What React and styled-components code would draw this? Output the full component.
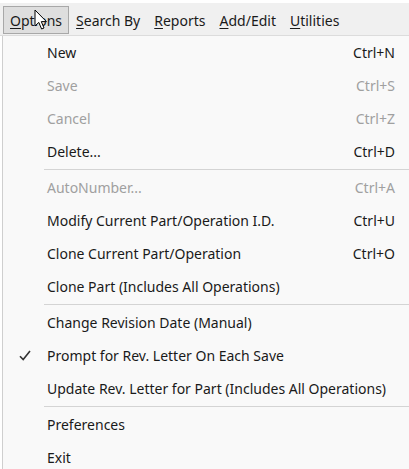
import React from 'react';
import styled, { createGlobalStyle } from 'styled-components';

const GlobalStyle = createGlobalStyle`
  html, body { margin: 0; padding: 0; background: #ffffff; }
  body { font-family: "Noto Sans", "Open Sans", sans-serif; }
`;

const menuNames = [
  { key: 'O', rest: 'ptions', active: true },
  { key: 'S', rest: 'earch By' },
  { key: 'R', rest: 'eports' },
  { key: 'A', rest: 'dd/Edit' },
  { key: 'U', rest: 'tilities' },
];

const items = [
  { label: 'New', shortcut: 'Ctrl+N' },
  { label: 'Save', shortcut: 'Ctrl+S', disabled: true },
  { label: 'Cancel', shortcut: 'Ctrl+Z', disabled: true },
  { label: 'Delete...', shortcut: 'Ctrl+D' },
  { separator: true },
  { label: 'AutoNumber...', shortcut: 'Ctrl+A', disabled: true },
  { label: 'Modify Current Part/Operation I.D.', shortcut: 'Ctrl+U' },
  { label: 'Clone Current Part/Operation', shortcut: 'Ctrl+O' },
  { label: 'Clone Part (Includes All Operations)' },
  { separator: true },
  { label: 'Change Revision Date (Manual)' },
  { label: 'Prompt for Rev. Letter On Each Save', checked: true },
  { label: 'Update Rev. Letter for Part (Includes All Operations)' },
  { separator: true },
  { label: 'Preferences' },
  { label: 'Exit' },
];

function App() {
  return (
    <Screen>
      <GlobalStyle />
      <MenuBar>
        {menuNames.map((m) => (
          <BarItem key={m.key} active={m.active}>
            <u>{m.key}</u>{m.rest}
          </BarItem>
        ))}
      </MenuBar>
      <Dropdown>
        {items.map((it, i) =>
          it.separator ? (
            <Separator key={i} />
          ) : (
            <Item key={i} disabled={it.disabled}>
              <CheckCell>
                {it.checked && (
                  <svg width="12" height="11" viewBox="0 0 12 11">
                    <path d="M1 6.2 L4.2 9.6 L11 1" fill="none" stroke="#333" strokeWidth="1.6" />
                  </svg>
                )}
              </CheckCell>
              <Label>{it.label}</Label>
              {it.shortcut && <Shortcut>{it.shortcut}</Shortcut>}
            </Item>
          )
        )}
      </Dropdown>
      <Cursor width="14" height="22" viewBox="0 0 14 22">
        <path d="M1 1 L1 17 L4.8 13.4 L7.6 20 L10 19 L7.3 12.6 L12.4 12.6 Z" fill="#fff" stroke="#000" strokeWidth="1" strokeLinejoin="round" />
      </Cursor>
    </Screen>
  );
}

export default App;

const Screen = styled.div`
  position: relative;
  width: 409px;
  height: 469px;
  overflow: hidden;
  background: #ffffff;
`;

const MenuBar = styled.div`
  display: flex;
  align-items: flex-start;
  height: 33px;
  margin-top: 3px;
  padding: 3px 0 0 3px;
  box-sizing: border-box;
  background: #f0f0f0;
  border-bottom: 1px solid #dcdcdc;
`;

const BarItem = styled.div`
  display: flex;
  align-items: center;
  height: 28px;
  padding: 0 6px;
  font-size: 14px;
  color: #1a1a1a;
  box-sizing: border-box;
  border: 1px solid ${(p) => (p.active ? '#a8a8a8' : 'transparent')};
  background: ${(p) => (p.active ? '#dedede' : 'transparent')};
  u { text-underline-offset: 2px; }
`;

const Dropdown = styled.div`
  margin-left: 2px;
  border-left: 1px solid #cfcfcf;
  background: #f9f9f9;
`;

const Item = styled.div`
  display: flex;
  align-items: center;
  height: 33px;
  font-size: 14px;
  color: ${(p) => (p.disabled ? '#a0a0a0' : '#1a1a1a')};
`;

const CheckCell = styled.div`
  flex: none;
  width: 44px;
  display: flex;
  justify-content: center;
  padding-right: 1px;
  box-sizing: border-box;
`;

const Label = styled.div`
  flex: 1;
  white-space: nowrap;
`;

const Shortcut = styled.div`
  padding-right: 14px;
  white-space: nowrap;
`;

const Separator = styled.div`
  height: 1px;
  margin: 1px 0 1px 41px;
  background: #d4d4d4;
`;

const Cursor = styled.svg`
  position: absolute;
  left: 34px;
  top: 9px;
`;
